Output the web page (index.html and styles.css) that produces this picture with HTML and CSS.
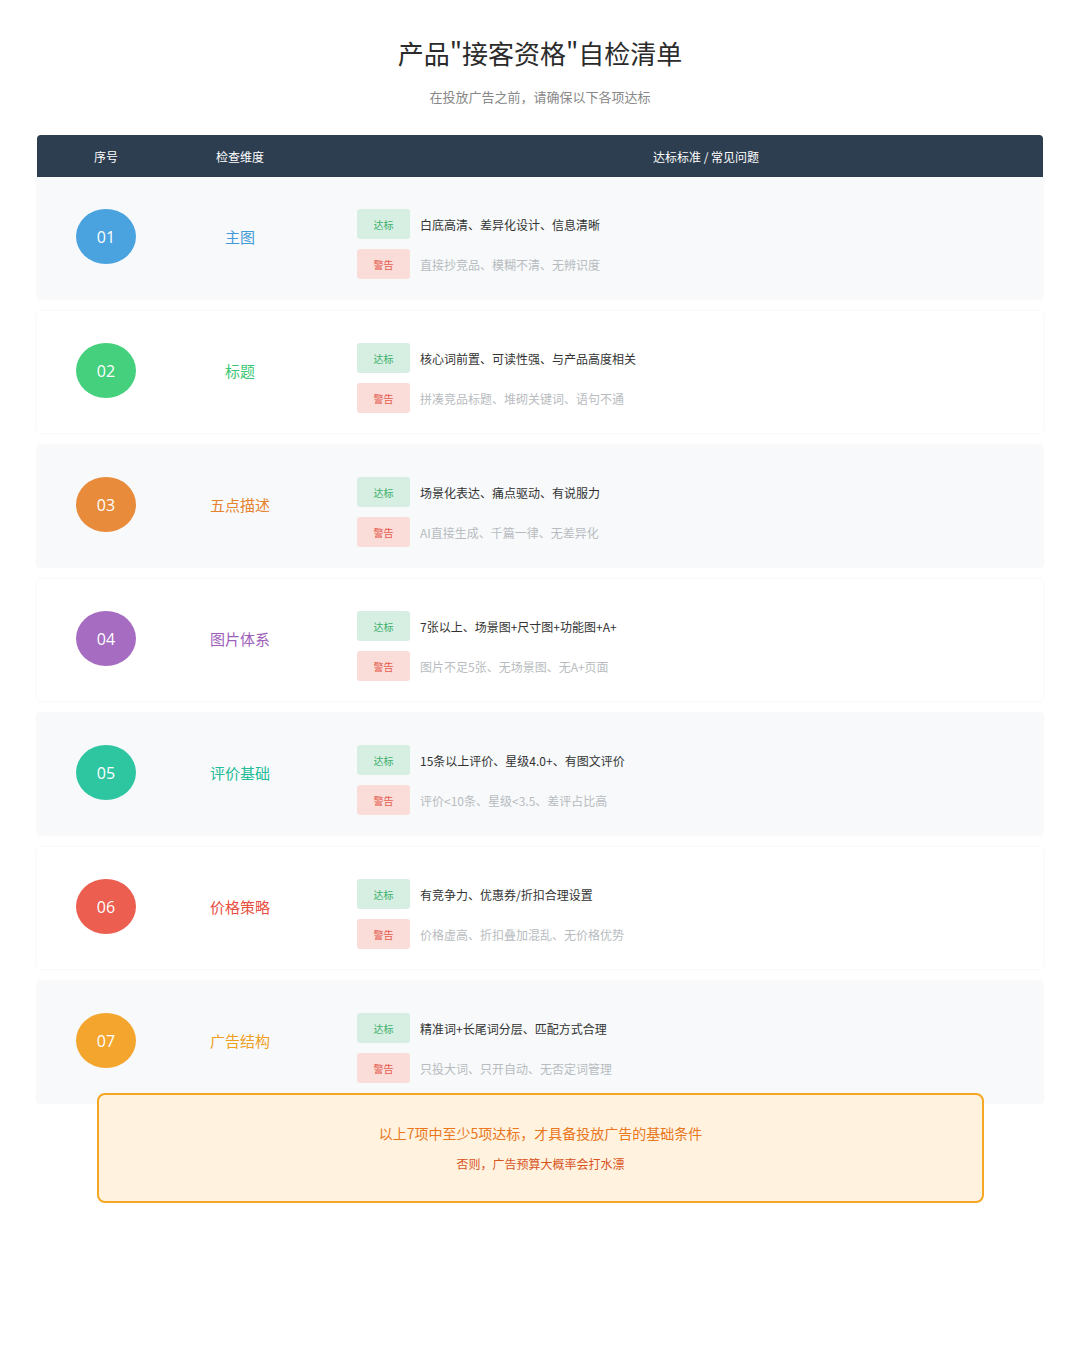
FILE: index.html
```html
<!DOCTYPE html>
<html lang="zh">
<head>
<meta charset="utf-8">
<link rel="stylesheet" href="styles.css">
</head>
<body>
<div class="page">
  <h1 class="title">产品"接客资格"自检清单</h1>
  <p class="subtitle">在投放广告之前，请确保以下各项达标</p>
  <div class="table">
    <div class="thead">
      <div class="c1">序号</div>
      <div class="c2">检查维度</div>
      <div class="c3">达标标准 / 常见问题</div>
    </div>
    <div class="row odd">
      <div class="c1"><span class="num blue">01</span></div>
      <div class="c2 name t-blue">主图</div>
      <div class="c3 items">
        <div class="item"><span class="badge ok">达标</span><span class="txt">白底高清、差异化设计、信息清晰</span></div>
        <div class="item"><span class="badge warn">警告</span><span class="txt muted">直接抄竞品、模糊不清、无辨识度</span></div>
      </div>
    </div>
    <div class="row even">
      <div class="c1"><span class="num green">02</span></div>
      <div class="c2 name t-green">标题</div>
      <div class="c3 items">
        <div class="item"><span class="badge ok">达标</span><span class="txt">核心词前置、可读性强、与产品高度相关</span></div>
        <div class="item"><span class="badge warn">警告</span><span class="txt muted">拼凑竞品标题、堆砌关键词、语句不通</span></div>
      </div>
    </div>
    <div class="row odd">
      <div class="c1"><span class="num orange">03</span></div>
      <div class="c2 name t-orange">五点描述</div>
      <div class="c3 items">
        <div class="item"><span class="badge ok">达标</span><span class="txt">场景化表达、痛点驱动、有说服力</span></div>
        <div class="item"><span class="badge warn">警告</span><span class="txt muted">AI直接生成、千篇一律、无差异化</span></div>
      </div>
    </div>
    <div class="row even">
      <div class="c1"><span class="num purple">04</span></div>
      <div class="c2 name t-purple">图片体系</div>
      <div class="c3 items">
        <div class="item"><span class="badge ok">达标</span><span class="txt">7张以上、场景图+尺寸图+功能图+A+</span></div>
        <div class="item"><span class="badge warn">警告</span><span class="txt muted">图片不足5张、无场景图、无A+页面</span></div>
      </div>
    </div>
    <div class="row odd">
      <div class="c1"><span class="num teal">05</span></div>
      <div class="c2 name t-teal">评价基础</div>
      <div class="c3 items">
        <div class="item"><span class="badge ok">达标</span><span class="txt">15条以上评价、星级4.0+、有图文评价</span></div>
        <div class="item"><span class="badge warn">警告</span><span class="txt muted">评价&lt;10条、星级&lt;3.5、差评占比高</span></div>
      </div>
    </div>
    <div class="row even">
      <div class="c1"><span class="num red">06</span></div>
      <div class="c2 name t-red">价格策略</div>
      <div class="c3 items">
        <div class="item"><span class="badge ok">达标</span><span class="txt">有竞争力、优惠券/折扣合理设置</span></div>
        <div class="item"><span class="badge warn">警告</span><span class="txt muted">价格虚高、折扣叠加混乱、无价格优势</span></div>
      </div>
    </div>
    <div class="row odd">
      <div class="c1"><span class="num yellow">07</span></div>
      <div class="c2 name t-yellow">广告结构</div>
      <div class="c3 items">
        <div class="item"><span class="badge ok">达标</span><span class="txt">精准词+长尾词分层、匹配方式合理</span></div>
        <div class="item"><span class="badge warn">警告</span><span class="txt muted">只投大词、只开自动、无否定词管理</span></div>
      </div>
    </div>
  </div>
  <div class="notice">
    <p class="n1">以上7项中至少5项达标，才具备投放广告的基础条件</p>
    <p class="n2">否则，广告预算大概率会打水漂</p>
  </div>
</div>
</body>
</html>
```
FILE: styles.css
```css
* { box-sizing: border-box; }
html, body { margin: 0; padding: 0; background: #ffffff; }
body {
  font-family: "Noto Sans CJK SC", "Noto Sans", sans-serif;
  color: #333;
}
.page {
  width: 1080px;
  padding: 34px 37px 0;
}
.title {
  margin: 0;
  text-align: center;
  font-size: 26px;
  font-weight: 400;
  line-height: 38px;
  color: #2b2b2b;
}
.subtitle {
  margin: 15px 0 0;
  text-align: center;
  font-size: 13px;
  line-height: 20px;
  color: #888;
}
.table {
  margin-top: 28px;
  display: flex;
  flex-direction: column;
  gap: 12px;
}
.thead {
  display: flex;
  height: 42px;
  align-items: center;
  background: #2d3e50;
  color: #fff;
  font-size: 12px;
  border-radius: 4px 4px 0 0;
  margin-bottom: -12px;
}
.c1 { width: 138px; flex: none; display: flex; justify-content: center; }
.c2 { width: 130px; flex: none; display: flex; justify-content: center; }
.c3 { flex: 1; }
.thead .c3 { text-align: center; padding-left: 64px; }
.row {
  display: flex;
  align-items: flex-start;
  height: 122px;
  padding-top: 32px;
  border-radius: 4px;
  box-shadow: 0 0 3px rgba(0, 0, 0, 0.06);
}
.row.odd { background: #f7f9fb; }
.row.even { background: #ffffff; }
.table .row:nth-child(2) { border-radius: 0 0 4px 4px; }
.num {
  width: 60px;
  height: 55px;
  border-radius: 50%;
  display: flex;
  align-items: center;
  justify-content: center;
  color: #fff;
  font-size: 16px;
  font-family: "Open Sans", "Noto Sans", sans-serif;
}
.name {
  height: 55px;
  align-items: center;
  font-size: 15px;
}
.items {
  padding-left: 52px;
  display: flex;
  flex-direction: column;
  gap: 10px;
}
.item { display: flex; align-items: center; gap: 10px; }
.badge {
  width: 53px;
  height: 30px;
  border-radius: 3px;
  display: flex;
  align-items: center;
  justify-content: center;
  font-size: 10px;
}
.badge.ok { background: #d6efe2; color: #3cae6a; }
.badge.warn { background: #fadcd8; color: #e55b4d; }
.txt { font-size: 12px; color: #333; }
.txt.muted { color: #b8bcc0; }

.blue { background: #4aa3df; }
.green { background: #44d07c; }
.orange { background: #e88b3a; }
.purple { background: #a66cc1; }
.teal { background: #2ec5a1; }
.red { background: #ec5e50; }
.yellow { background: #f3a52d; }
.t-blue { color: #3f9ad8; }
.t-green { color: #3cc775; }
.t-orange { color: #e6832f; }
.t-purple { color: #9e5fbb; }
.t-teal { color: #22bc98; }
.t-red { color: #e84f41; }
.t-yellow { color: #f19f1f; }

.notice {
  position: relative;
  margin: -10px 59px 0 60px;
  height: 110px;
  border: 2px solid #f5a623;
  border-radius: 8px;
  background: #fff3e0;
  display: flex;
  flex-direction: column;
  align-items: center;
  justify-content: center;
  gap: 12px;
}
.notice p { margin: 0; }
.n1 { font-size: 14px; color: #e8771e; line-height: 20px; }
.n2 { font-size: 12px; color: #d9531e; line-height: 18px; }
```
